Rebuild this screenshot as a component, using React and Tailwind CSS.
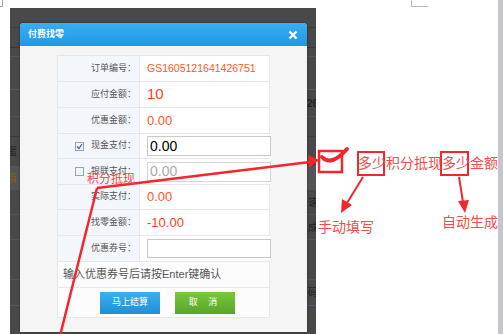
import React from "react";

const cjk = "font-['Liberation_Sans','Noto_Sans_CJK_SC',sans-serif]";

const Row = ({ label, children, h = "h-[26px]", left }) => (
  <div className={`flex ${h} border-b border-[#e3e8ee]`}>
    <div className="w-[82px] shrink-0 bg-[#f3f7fc] border-r border-[#e3e8ee] flex items-center justify-end gap-[7px] pr-[3px] text-[9px] text-[#555]">
      {left}
      <span>{label}：</span>
    </div>
    <div className="flex-1 flex items-center pl-[7px] bg-white">{children}</div>
  </div>
);

const Check = ({ on }) => (
  <span className="w-[9px] h-[9px] border border-[#9aa3ad] bg-[#f3f4f6] flex items-center justify-center">
    {on && (
      <svg width="7" height="7" viewBox="0 0 7 7">
        <path d="M1 3.5 L3 5.5 L6 1" stroke="#3a5fa8" strokeWidth="1.2" fill="none" />
      </svg>
    )}
  </span>
);

const BgRow = ({ h, border = "border-[#3c3c3c]", children, className = "" }) => (
  <div className={`${h} border-b ${border} flex items-center justify-between ${className}`}>
    {children}
  </div>
);

export default function App() {
  return (
    <div className={`relative w-[503px] h-[334px] bg-white overflow-hidden flex pl-[10px] pt-[8px] ${cjk}`}>
      {/* corner marks of the document page */}
      <div className="absolute left-0 top-0 w-[3px] h-[7px] border-r border-b border-[#aaa]" />
      <div className="absolute left-[411px] top-0 w-[17px] h-[7px] border-l border-b border-[#bbb]" />

      {/* dark screenshot backdrop */}
      <div className="relative w-[306px] h-[326px] bg-[#494949] overflow-hidden flex flex-col">
        <BgRow h="h-[20px]" />
        <BgRow h="h-[20px]" border="border-[#3a3a3a]" />
        <BgRow h="h-[9px]" border="border-[#555]" />
        <BgRow h="h-[33px]" border="border-[#4f5b6a]" />
        <BgRow h="h-[27px]" border="border-[#555]">
          <span />
          <span className="text-[10px] font-bold text-[#222] -mr-[2px]">26</span>
        </BgRow>
        <BgRow h="h-[20px]" border="border-[#3d3d3d]" />
        <BgRow h="h-[30px]" border="border-[#555]">
          <span className="text-[10px] text-[#222] -ml-[3px]">蛋</span>
        </BgRow>
        <BgRow h="h-[23px]" border="border-[#555]" className="bg-[#525456]">
          <span className="text-[10px] text-[#8a5a1c] -ml-[3px]">百</span>
        </BgRow>
        <BgRow h="h-[25px]" border="border-[#555]">
          <span />
          <span className="text-[10px] text-[#222] -mr-[2px]">速</span>
        </BgRow>
        <BgRow h="h-[25px]" border="border-[#555]">
          <span />
          <span className="text-[10px] text-[#222] -mr-[2px]">成</span>
        </BgRow>
        <BgRow h="h-[40px]" border="border-[#555]" />
        <BgRow h="h-[26px]" border="border-[#4f5b6a]">
          <span />
          <span className="text-[10px] text-[#222] -mr-[2px]">码</span>
        </BgRow>

        {/* modal */}
        <div className="absolute left-[10px] top-[15px] w-[287px] h-[309px] rounded-t-[4px] overflow-hidden bg-[#f5f5f5] shadow-[0_0_3px_rgba(0,0,0,0.4)] flex flex-col">
          <div className="h-[23px] shrink-0 bg-gradient-to-b from-[#38adf2] to-[#1d9ae6] flex items-center justify-between pl-[8px] pr-[9px]">
            <span className="text-[9px] font-bold text-white">付费找零</span>
            <svg width="10" height="10" viewBox="0 0 10 10">
              <path d="M1.5 1.5 L8.5 8.5 M8.5 1.5 L1.5 8.5" stroke="#fff" strokeWidth="2.2" />
            </svg>
          </div>
          <div className="pt-[9px] flex justify-center">
            <div className="w-[213px] border-t border-x border-[#e3e8ee]">
              <Row label="订单编号">
                <span className="text-[10.5px] text-[#ff5722]">GS1605121641426751</span>
              </Row>
              <Row label="应付金额">
                <span className="text-[15px] text-[#ff3d1f]">10</span>
              </Row>
              <Row label="优惠金额">
                <span className="text-[13px] text-[#ff5722]">0.00</span>
              </Row>
              <Row label="现金支付" h="h-[25px]" left={<Check on />}>
                <div className="w-[124px] h-[20px] border border-[#c9c9c9] bg-white flex items-center pl-[2px] text-[14px] text-black">
                  0.00
                </div>
              </Row>
              <Row label="银联支付" left={<Check />}>
                <div className="w-[124px] h-[20px] border border-[#d5d5d5] bg-white flex items-center pl-[2px] text-[14px] text-[#aaa]">
                  0.00
                </div>
              </Row>
              <Row label="实际支付" h="h-[25px]">
                <span className="text-[13px] text-[#ff5722]">0.00</span>
              </Row>
              <Row label="找零金额">
                <span className="text-[13px] text-[#ff3d1f]">-10.00</span>
              </Row>
              <Row label="优惠券号">
                <div className="w-[124px] h-[19px] border border-[#c9c9c9] bg-white" />
              </Row>
              <div className="h-[26px] border-b border-[#e3e8ee] bg-[#fcfcfc] flex items-center pl-[5px] text-[11px] text-[#555]">
                输入优惠券号后请按Enter键确认
              </div>
              <div className="h-[30px] border-b border-[#e3e8ee] bg-[#fcfcfc] flex items-center pl-[42px] gap-[15px]">
                <button className="w-[60px] h-[22px] bg-gradient-to-b from-[#3cb0ee] to-[#1e8fd6] text-white text-[9px]">
                  马上结算
                </button>
                <button className="w-[60px] h-[22px] bg-gradient-to-b from-[#78c93a] to-[#58a52a] text-white text-[9px] tracking-[4px]">
                  取 消
                </button>
              </div>
            </div>
          </div>
        </div>
      </div>

      {/* right scrollbar edge */}
      <div className="ml-auto -mt-[8px] w-[5px] h-[334px] bg-[#c3c6cc]" />

      {/* red annotations */}
      <svg className="absolute inset-0 pointer-events-none" width="503" height="334" viewBox="0 0 503 334">
        <line x1="60" y1="336" x2="97" y2="188" stroke="#f2262b" strokeWidth="2.5" />
        <line x1="97" y1="188" x2="310" y2="162" stroke="#f2262b" strokeWidth="2.5" />
        <polygon points="319,160 308,155 309,168" fill="#f2262b" />
        <rect x="319" y="151" width="23" height="21" fill="none" stroke="#f2262b" strokeWidth="2.5" />
        <path d="M322 157 Q331 167 347 149" stroke="#f2262b" strokeWidth="4" fill="none" strokeLinecap="round" />
        <rect x="358" y="152" width="26" height="23" fill="none" stroke="#f2262b" strokeWidth="2" />
        <rect x="441" y="152" width="27" height="23" fill="none" stroke="#f2262b" strokeWidth="2" />
        <line x1="363" y1="177" x2="347" y2="203" stroke="#f2262b" strokeWidth="2" />
        <polygon points="341,213 342,199 352,205" fill="#f2262b" />
        <line x1="459" y1="177" x2="463" y2="202" stroke="#f2262b" strokeWidth="2" />
        <polygon points="465,213 458,201 469,200" fill="#f2262b" />
      </svg>
      <span className="absolute left-[87px] top-[171px] text-[12px] leading-[16px] text-[#f54b4b]">积分抵现</span>
      <span className="absolute left-[358px] top-[154px] text-[14px] leading-[18px] text-[#f54b4b] whitespace-nowrap">
        多少积分抵现多少金额
      </span>
      <span className="absolute left-[318px] top-[218px] text-[14px] leading-[18px] text-[#f54b4b]">手动填写</span>
      <span className="absolute left-[442px] top-[213px] text-[14px] leading-[18px] text-[#f54b4b]">自动生成</span>
    </div>
  );
}
